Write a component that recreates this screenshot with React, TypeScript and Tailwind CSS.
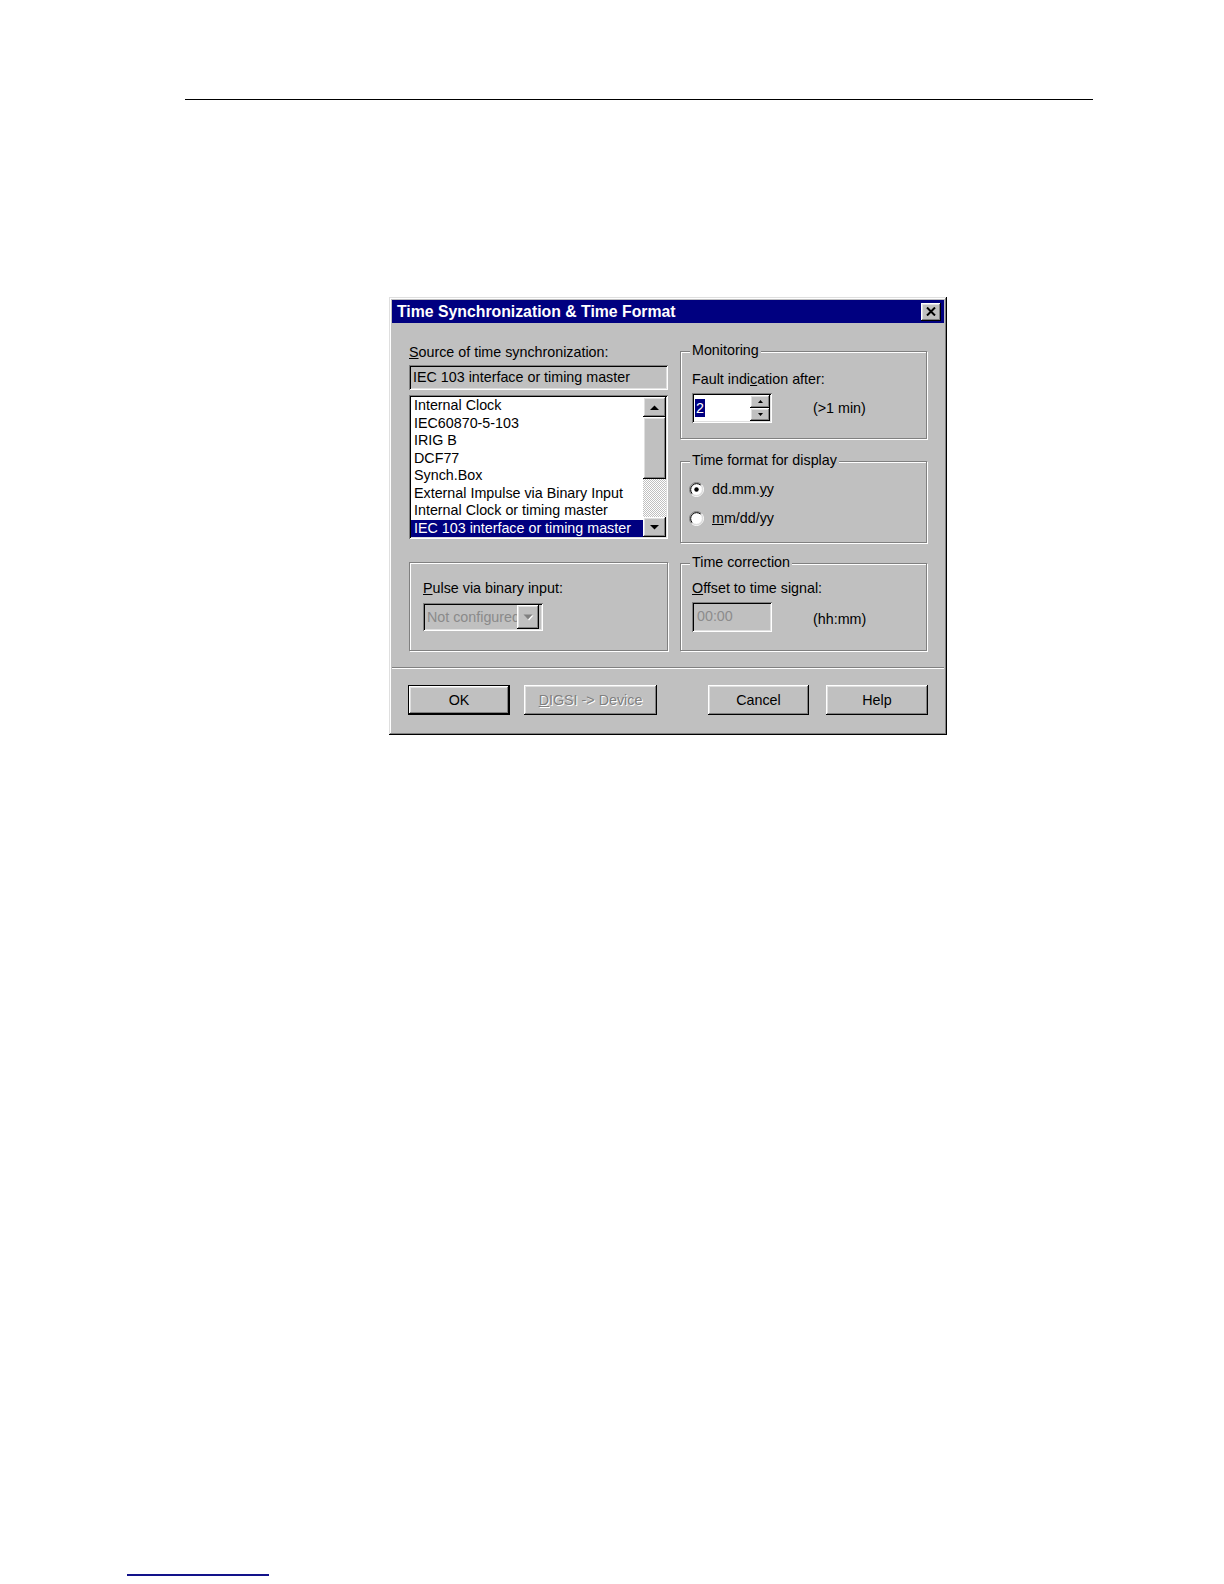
import React from "react";

const font = "font-['Liberation_Sans',Arial,Helvetica,sans-serif]";
const raised =
  "shadow-[inset_-1px_-1px_0_0_#000,inset_1px_1px_0_0_#fff,inset_-2px_-2px_0_0_#808080,inset_2px_2px_0_0_#dfdfdf]";
const frame =
  "shadow-[inset_-1px_-1px_0_0_#000,inset_1px_1px_0_0_#dfdfdf,inset_-2px_-2px_0_0_#808080,inset_2px_2px_0_0_#fff]";
const sunken =
  "shadow-[inset_1px_1px_0_0_#808080,inset_-1px_-1px_0_0_#fff,inset_2px_2px_0_0_#000,inset_-2px_-2px_0_0_#dfdfdf]";
const etched = "border border-[#808080] shadow-[inset_1px_1px_0_0_#fff,1px_1px_0_0_#fff]";
const embossed = "text-[#808080] [text-shadow:1px_1px_0_#fff]";

const sources = [
  "Internal Clock",
  "IEC60870-5-103",
  "IRIG B",
  "DCF77",
  "Synch.Box",
  "External Impulse via Binary Input",
  "Internal Clock or timing master",
  "IEC 103 interface or timing master",
];

export default function App() {
  return (
    <div className={`w-[1224px] h-[1584px] bg-white overflow-hidden text-[14.3px] text-black ${font}`}>
      <div className="pt-[99px] pl-[185px]">
        <div className="w-[908px] h-px bg-black" />
      </div>

      <Dialog />

      <div className="mt-[839px] ml-[127px] w-[142px] h-[2px] bg-[#12128a]" />
    </div>
  );
}

function Dialog() {
  return (
    <div className={`ml-[389px] mt-[197px] w-[558px] h-[438px] bg-[#c0c0c0] p-[3px] flex flex-col ${frame}`}>
      <div className="h-[23px] bg-[#000080] flex items-center justify-between pl-[5px] pr-[3px]">
        <span className="text-white font-bold text-[15.8px] leading-none">Time Synchronization &amp; Time Format</span>
        <div className={`w-[20px] h-[18px] bg-[#c0c0c0] flex items-center justify-center ${raised}`}>
          <svg width="10" height="9" viewBox="0 0 10 9">
            <path d="M1 0.5L9 8.5M9 0.5L1 8.5" stroke="#000" strokeWidth="2" />
          </svg>
        </div>
      </div>

      <div className="flex pl-[17px]">
        {/* left column */}
        <div className="w-[259px] flex flex-col">
          <div className="mt-[21px] leading-[17px]">
            <span className="underline">S</span>ource of time synchronization:
          </div>
          <div className={`mt-[4px] h-[25px] flex items-center pl-[4px] leading-[17px] ${sunken}`}>
            IEC 103 interface or timing master
          </div>
          <div className={`mt-[5px] h-[144px] bg-white p-[2px] flex ${sunken}`}>
            <div className="flex-1 flex flex-col">
              {sources.map((s, i) => (
                <div
                  key={s}
                  className={`h-[17.5px] leading-[17.5px] pl-[3px] whitespace-nowrap ${
                    i === sources.length - 1 ? "bg-[#000080] text-white" : ""
                  }`}
                >
                  {s}
                </div>
              ))}
            </div>
            <Scrollbar />
          </div>
          <div className={`mt-[23px] h-[89px] pl-[13px] pt-[17px] ${etched}`}>
            <div className="leading-[17px]">
              <span className="underline">P</span>ulse via binary input:
            </div>
            <div className={`mt-[6px] w-[120px] h-[28px] p-[2px] flex ${sunken}`}>
              <div className="w-[92px] overflow-hidden whitespace-nowrap pl-[2px] leading-[24px] text-[#8a8a8a]">
                Not configured
              </div>
              <div className={`w-[22px] bg-[#c0c0c0] flex items-center justify-center ${raised}`}>
                <svg width="11" height="7" viewBox="0 0 11 7">
                  <path d="M1.5 1.5h9l-4.5 5z" fill="#fff" />
                  <path d="M0.5 0.5h9l-4.5 5z" fill="#808080" />
                </svg>
              </div>
            </div>
          </div>
        </div>

        {/* right column */}
        <div className="ml-[12px] w-[247px] flex flex-col">
          <GroupBox title="Monitoring" className="mt-[28px] h-[88px] pl-[11px] pt-[19px]">
            <div className="leading-[17px]">
              Fault indi<span className="underline">c</span>ation after:
            </div>
            <div className="mt-[5px] flex items-center">
              <div className={`w-[80px] h-[30px] bg-white p-[2px] flex ${sunken}`}>
                <div className="flex-1 flex items-center pl-[1px]">
                  <span className="bg-[#000080] text-white leading-[18px] px-[1px]">2</span>
                </div>
                <div className="w-[20px] flex flex-col">
                  <SpinButton up />
                  <SpinButton />
                </div>
              </div>
              <span className="ml-[41px] leading-[17px]">(&gt;1 min)</span>
            </div>
          </GroupBox>

          <GroupBox title="Time format for display" className="mt-[22px] h-[82px] pl-[8px] pt-[19px]">
            <div className="flex items-center gap-[8px] h-[17px]">
              <Radio checked />
              <span>
                dd.mm.<span className="underline">y</span>y
              </span>
            </div>
            <div className="mt-[12px] flex items-center gap-[8px] h-[17px]">
              <Radio />
              <span>
                <span className="underline">m</span>m/dd/yy
              </span>
            </div>
          </GroupBox>

          <GroupBox title="Time correction" className="mt-[20px] h-[88px] pl-[11px] pt-[16px]">
            <div className="leading-[17px]">
              <span className="underline">O</span>ffset to time signal:
            </div>
            <div className="mt-[5px] flex items-center">
              <div className={`w-[80px] h-[30px] flex items-center pl-[5px] text-[#8c8c8c] ${sunken}`}>00:00</div>
              <span className="ml-[41px] mt-[4px] leading-[17px]">(hh:mm)</span>
            </div>
          </GroupBox>
        </div>
      </div>

      <div className="mt-[16px] h-[2px] border-t border-[#808080] border-b border-b-white" />

      <div className="mt-[16px] flex pl-[16px]">
        <Button className="w-[102px] border border-black">OK</Button>
        <Button className="ml-[14px] w-[133px]">
          <span className={embossed}>
            <span className="underline">D</span>IGSI -&gt; Device
          </span>
        </Button>
        <Button className="ml-[51px] w-[101px]">Cancel</Button>
        <Button className="ml-[17px] w-[102px]">Help</Button>
      </div>
    </div>
  );
}

function GroupBox({ title, className, children }: { title: string; className: string; children: React.ReactNode }) {
  return (
    <div className={`relative ${etched} ${className}`}>
      <span className="absolute left-[9px] top-[-10px] bg-[#c0c0c0] px-[2px] leading-[17px] whitespace-nowrap">
        {title}
      </span>
      {children}
    </div>
  );
}

function Button({ className, children }: { className: string; children: React.ReactNode }) {
  return (
    <div className={`h-[30px] bg-[#c0c0c0] flex items-center justify-center ${className}`}>
      <div className={`w-full h-full flex items-center justify-center leading-[17px] ${raised}`}>{children}</div>
    </div>
  );
}

function Scrollbar() {
  return (
    <div className="w-[23px] flex flex-col">
      <div className={`h-[20px] bg-[#c0c0c0] flex items-center justify-center ${raised}`}>
        <svg width="9" height="5" viewBox="0 0 9 5">
          <path d="M0 5L4.5 0.5L9 5z" fill="#000" />
        </svg>
      </div>
      <div className={`h-[62px] bg-[#c0c0c0] ${raised}`} />
      <div className="flex-1 bg-[repeating-conic-gradient(#ffffff_0_25%,#c0c0c0_0_50%)] bg-[length:2px_2px]" />
      <div className={`h-[20px] bg-[#c0c0c0] flex items-center justify-center ${raised}`}>
        <svg width="9" height="5" viewBox="0 0 9 5">
          <path d="M0 0L4.5 4.5L9 0z" fill="#000" />
        </svg>
      </div>
    </div>
  );
}

function SpinButton({ up }: { up?: boolean }) {
  return (
    <div className={`h-[13px] bg-[#c0c0c0] flex items-center justify-center ${raised}`}>
      <svg width="5" height="3" viewBox="0 0 5 3">
        {up ? <path d="M0 3L2.5 0L5 3z" fill="#000" /> : <path d="M0 0L2.5 3L5 0z" fill="#000" />}
      </svg>
    </div>
  );
}

function Radio({ checked }: { checked?: boolean }) {
  return (
    <svg width="15" height="15" viewBox="0 0 15 15" className="shrink-0">
      <circle cx="7.5" cy="7.5" r="6" fill="#fff" />
      <path d="M2.55 12.45A7 7 0 0 1 12.45 2.55" stroke="#808080" fill="none" />
      <path d="M12.45 2.55A7 7 0 0 1 2.55 12.45" stroke="#fff" fill="none" />
      <path d="M3.26 11.74A6 6 0 0 1 11.74 3.26" stroke="#000" fill="none" />
      <path d="M11.74 3.26A6 6 0 0 1 3.26 11.74" stroke="#dfdfdf" fill="none" />
      {checked && <circle cx="7.5" cy="7.5" r="2.2" fill="#000" />}
    </svg>
  );
}
